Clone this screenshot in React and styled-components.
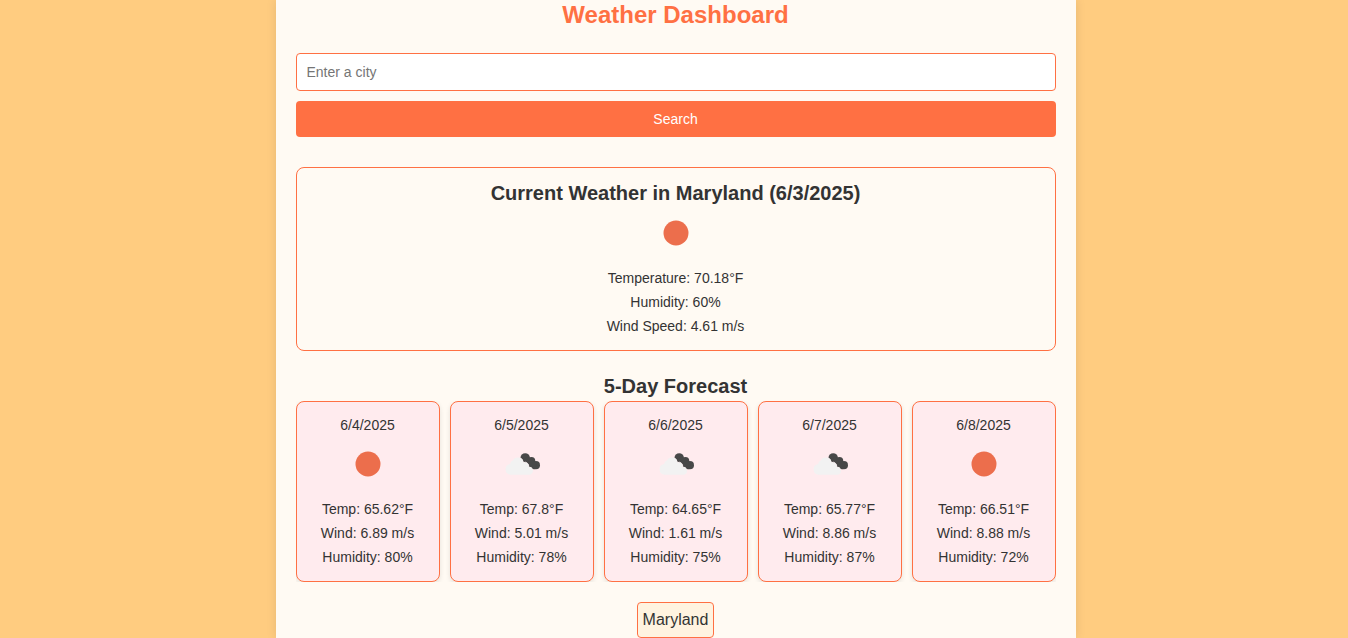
import React from "react";
import styled, { createGlobalStyle } from "styled-components";

const Global = createGlobalStyle`
  * { box-sizing: border-box; margin: 0; padding: 0; }
  html, body { height: 100%; overflow: hidden; }
  body {
    background: #ffcc80;
    color: #333;
    font-family: "Liberation Sans", Arial, sans-serif;
    font-size: 16px;
  }
`;

const Page = styled.div`
  display: flex;
  justify-content: center;
  padding-left: 3px;
`;

const Panel = styled.main`
  width: 800px;
  height: 638px;
  padding: 0 20px;
  background: #fffaf3;
  box-shadow: 0 0 10px rgba(0, 0, 0, 0.1);
  text-align: center;
`;

const Title = styled.h1`
  color: #ff7043;
  font-size: 24px;
  line-height: 30px;
`;

const SearchForm = styled.form`
  display: flex;
  flex-direction: column;
  gap: 10px;
  margin-top: 23px;
`;

const CityInput = styled.input`
  height: 38px;
  padding: 0 10px;
  border: 1px solid #ff7043;
  border-radius: 4px;
  background: #fff;
  font-family: inherit;
  font-size: 14px;
`;

const SearchButton = styled.button`
  height: 36px;
  border: 0;
  border-radius: 4px;
  background: #ff7043;
  color: #fff;
  font-family: inherit;
  font-size: 14px;
`;

const Current = styled.section`
  height: 184px;
  margin-top: 30px;
  padding-top: 10px;
  border: 1px solid #ff7043;
  border-radius: 8px;
`;

const Heading = styled.h2`
  font-size: 20px;
  line-height: 30px;
`;

const Icon = styled.svg`
  display: block;
  width: 50px;
  height: 50px;
  margin: ${(p) => p.$top || 0}px auto 0;
`;

const Line = styled.p`
  font-size: 14px;
  line-height: 24px;
`;

const Readings = styled.div`
  margin-top: 8px;
`;

const Forecast = styled.section`
  margin-top: 20px;
`;

const Cards = styled.div`
  display: grid;
  grid-template-columns: repeat(5, 1fr);
  gap: 10px;
  overflow: hidden;
`;

const Card = styled.article`
  height: 181px;
  padding-top: 11px;
  border: 1px solid #ff7043;
  border-radius: 8px;
  background: #ffebee;
  box-shadow: 0 2px 5px rgba(0, 0, 0, 0.1);
`;

const HistoryItem = styled.button`
  height: 36px;
  margin-top: 20px;
  padding: 0 5px;
  border: 1px solid #ff7043;
  border-radius: 4px;
  background: #fff3e0;
  color: #333;
  font-family: inherit;
  font-size: 16px;
`;

const CLOUD =
  "M13.6 35.8a5.500 5.500 0 0 1-.500-10.900 4.300 4.300 0 0 1 2.700-3.300 5.600 5.600 0 0 1 10.600 2 3.800 3.800 0 0 1 5.200 4.400 4 4 0 0 1 1.500 7.800Z";

function WeatherIcon({ kind, top }) {
  return (
    <Icon viewBox="0 0 50 50" $top={top} aria-hidden="true">
      {kind === "clear" ? (
        <circle cx="25" cy="25" r="12.5" fill="#ec6e4c" />
      ) : (
        <>
          <g fill="#484848">
            <circle cx="28.200" cy="18.900" r="4.700" />
            <circle cx="34.400" cy="22" r="3.900" />
            <circle cx="38.900" cy="26.200" r="4.100" />
            <path d="M26 20L31.500 18L40 24.500L38 30.200L34 30L29 25Z" />
          </g>
          <path d={CLOUD} fill="#f2f2f2" stroke="#ffebee" strokeWidth="1" paintOrder="stroke" />
        </>
      )}
    </Icon>
  );
}

const days = [
  { date: "6/4/2025", kind: "clear", temp: "65.62", wind: "6.89", humidity: 80 },
  { date: "6/5/2025", kind: "clouds", temp: "67.8", wind: "5.01", humidity: 78 },
  { date: "6/6/2025", kind: "clouds", temp: "64.65", wind: "1.61", humidity: 75 },
  { date: "6/7/2025", kind: "clouds", temp: "65.77", wind: "8.86", humidity: 87 },
  { date: "6/8/2025", kind: "clear", temp: "66.51", wind: "8.88", humidity: 72 },
];

export default function App() {
  return (
    <Page>
      <Global />
      <Panel>
        <Title>Weather Dashboard</Title>
        <SearchForm onSubmit={(e) => e.preventDefault()}>
          <CityInput placeholder="Enter a city" />
          <SearchButton>Search</SearchButton>
        </SearchForm>
        <Current>
          <Heading>Current Weather in Maryland (6/3/2025)</Heading>
          <WeatherIcon kind="clear" />
          <Readings>
            <Line>Temperature: 70.18°F</Line>
            <Line>Humidity: 60%</Line>
            <Line>Wind Speed: 4.61 m/s</Line>
          </Readings>
        </Current>
        <Forecast>
          <Heading>5-Day Forecast</Heading>
          <Cards>
            {days.map((d) => (
              <Card key={d.date}>
                <Line>{d.date}</Line>
                <WeatherIcon kind={d.kind} top={2} />
                <Readings>
                  <Line>Temp: {d.temp}°F</Line>
                  <Line>Wind: {d.wind} m/s</Line>
                  <Line>Humidity: {d.humidity}%</Line>
                </Readings>
              </Card>
            ))}
          </Cards>
        </Forecast>
        <HistoryItem>Maryland</HistoryItem>
      </Panel>
    </Page>
  );
}
